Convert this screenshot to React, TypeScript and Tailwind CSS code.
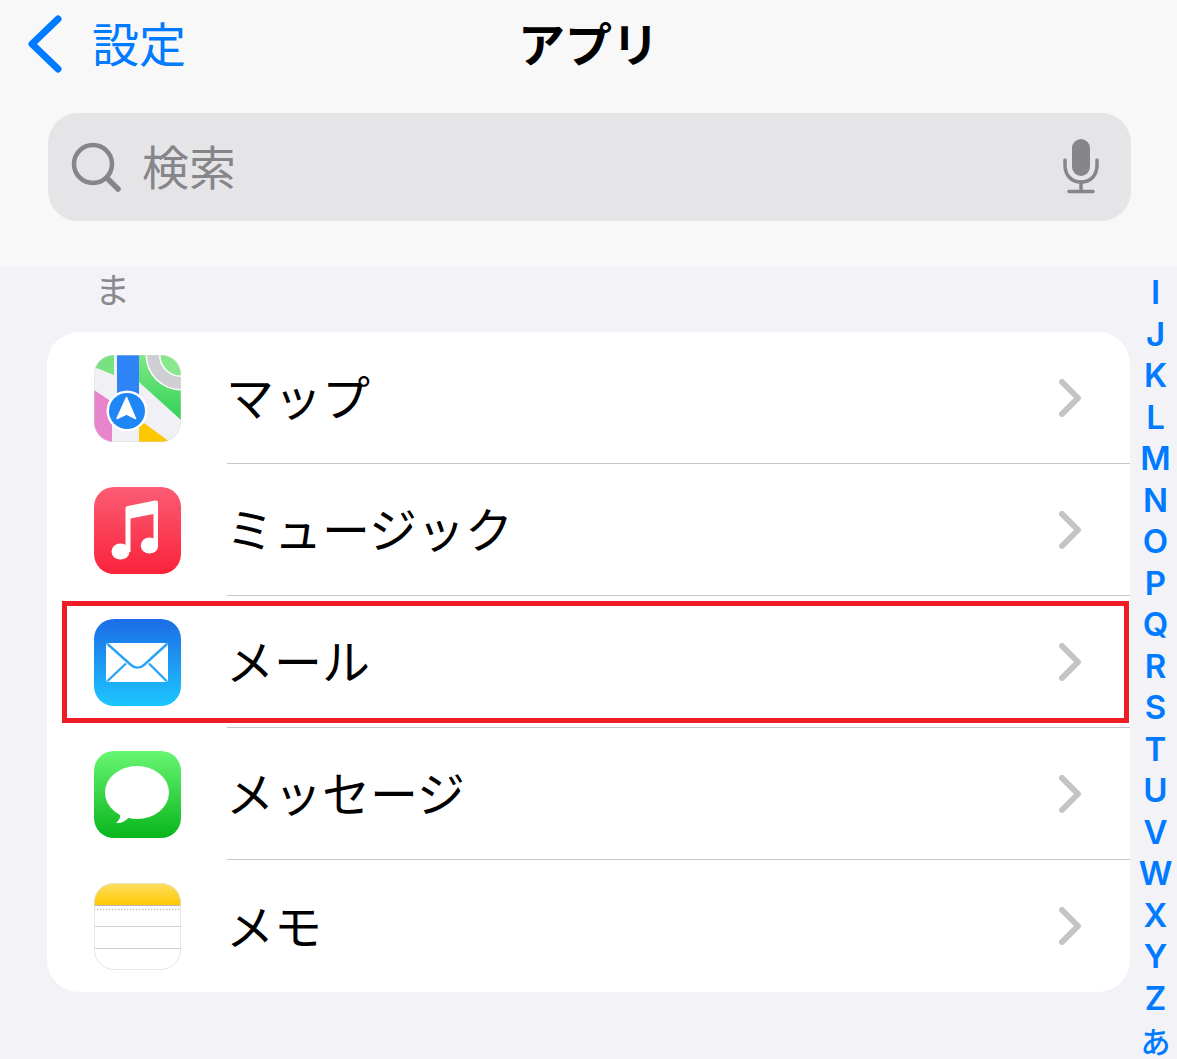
import React from 'react';

const jp = '"Noto Sans CJK JP", "Noto Sans", sans-serif';

const MapsIcon = () => (
    <svg viewBox="0 0 87 87" className="w-[87px] h-[87px]">
        <defs>
            <clipPath id="mapClip"><rect width="87" height="87" rx="20" /></clipPath>
            <linearGradient id="mapGreen" x1="0" y1="0" x2="0" y2="1">
                <stop offset="0" stopColor="#80e885" />
                <stop offset="1" stopColor="#30d158" />
            </linearGradient>
        </defs>
        <g clipPath="url(#mapClip)">
            <rect width="87" height="87" fill="#f1f0f4" />
            <path d="M0 0H20V20L0 12Z" fill="#78e280" />
            <path d="M45 0H87V65L45 27Z" fill="url(#mapGreen)" />
            <circle cx="87" cy="0" r="35.5" fill="#fff" />
            <circle cx="87" cy="0" r="34" fill="#cfcfd3" />
            <circle cx="87" cy="0" r="22" fill="#fff" />
            <circle cx="87" cy="0" r="20.5" fill="#86e88a" />
            <path d="M0 35L18 47V87H0Z" fill="#e884cc" />
            <path d="M45 71L50 68L76 87H45Z" fill="#fdc700" />
            <rect x="23" width="22" height="50" fill="#2f84f8" />
            <circle cx="33" cy="56" r="20.5" fill="#fff" />
            <circle cx="33" cy="56" r="18" fill="#1f86f5" />
            <path d="M32.5 42.5L41.5 63.5L32.5 59L23 63.5Z" fill="#fff" stroke="#fff" strokeWidth="1.5" strokeLinejoin="round" />
        </g>
        <rect x="0.25" y="0.25" width="86.5" height="86.5" rx="20" fill="none" stroke="#d8d8dc" strokeWidth="0.5" />
    </svg>
);

const MusicIcon = () => (
    <svg viewBox="0 0 87 87" className="w-[87px] h-[87px]">
        <defs>
            <linearGradient id="musicBg" x1="0" y1="0" x2="0" y2="1">
                <stop offset="0" stopColor="#fb5c74" />
                <stop offset="1" stopColor="#fa233b" />
            </linearGradient>
        </defs>
        <rect width="87" height="87" rx="20" fill="url(#musicBg)" />
        <path d="M31.5 21.5C31.5 20 32.5 19.2 34 18.9L61 13.5C62.8 13.1 64 14 64 15.5V59H59.5V27L36.5 31.5V65H31.5Z" fill="#fff" />
        <ellipse cx="26.5" cy="64.5" rx="9" ry="8" fill="#fff" />
        <ellipse cx="55.5" cy="58.5" rx="8.7" ry="8" fill="#fff" />
    </svg>
);

const MailIcon = () => (
    <svg viewBox="0 0 87 87" className="w-[87px] h-[87px]">
        <defs>
            <linearGradient id="mailBg" x1="0" y1="0" x2="0" y2="1">
                <stop offset="0" stopColor="#1d6ce6" />
                <stop offset="1" stopColor="#1cc6fe" />
            </linearGradient>
        </defs>
        <rect width="87" height="87" rx="20" fill="url(#mailBg)" />
        <rect x="12" y="24" width="62" height="39" rx="3" fill="#fff" />
        <path d="M13.5 25L37 46C41 49.5 46 49.5 50 46L73 25" fill="none" stroke="#2aa3f6" strokeWidth="2.4" />
        <path d="M13.5 62L32 44.5M72.5 62L55 44.5" fill="none" stroke="#2aa3f6" strokeWidth="2.4" />
    </svg>
);

const MessagesIcon = () => (
    <svg viewBox="0 0 87 87" className="w-[87px] h-[87px]">
        <defs>
            <linearGradient id="msgBg" x1="0" y1="0" x2="0" y2="1">
                <stop offset="0" stopColor="#68f672" />
                <stop offset="1" stopColor="#08b51c" />
            </linearGradient>
        </defs>
        <rect width="87" height="87" rx="20" fill="url(#msgBg)" />
        <ellipse cx="43" cy="41.5" rx="32" ry="26.5" fill="#fff" />
        <path d="M26 60C27 65 26 69 22 72C27 72.5 31.5 70.5 35 66Z" fill="#fff" />
    </svg>
);

const NotesIcon = () => (
    <svg viewBox="0 0 87 87" className="w-[87px] h-[87px]">
        <defs>
            <clipPath id="noteClip"><rect width="87" height="87" rx="20" /></clipPath>
            <linearGradient id="noteTop" x1="0" y1="0" x2="0" y2="1">
                <stop offset="0" stopColor="#ffde62" />
                <stop offset="1" stopColor="#fdc902" />
            </linearGradient>
        </defs>
        <g clipPath="url(#noteClip)">
            <rect width="87" height="87" fill="#fff" />
            <rect width="87" height="22" fill="url(#noteTop)" />
            <rect y="22" width="87" height="1" fill="#b9b9b9" />
            <line x1="0" y1="26.5" x2="87" y2="26.5" stroke="#c2c2c4" strokeWidth="1.4" strokeDasharray="1.4 1.6" />
            <rect y="43" width="87" height="1" fill="#d2d2d4" />
            <rect y="65" width="87" height="1" fill="#d2d2d4" />
        </g>
        <rect x="0.4" y="0.4" width="86.2" height="86.2" rx="20" fill="none" stroke="#dedede" strokeWidth="0.8" />
    </svg>
);

const rows = [
    { name: 'マップ', icon: <MapsIcon /> },
    { name: 'ミュージック', icon: <MusicIcon /> },
    { name: 'メール', icon: <MailIcon />, marked: true },
    { name: 'メッセージ', icon: <MessagesIcon /> },
    { name: 'メモ', icon: <NotesIcon /> },
];

const letters = ['I', 'J', 'K', 'L', 'M', 'N', 'O', 'P', 'Q', 'R', 'S', 'T', 'U', 'V', 'W', 'X', 'Y', 'Z'];

const App: React.FC = () => {
    return (
        <div className="w-[1177px] h-[1059px] overflow-hidden bg-[#f2f2f7]" style={{ fontFamily: jp }}>
            {/* Header */}
            <div className="h-[266px] bg-[#f9f8f8]">
                <div className="h-[88px] grid grid-cols-[1fr_auto_1fr] items-center">
                    <div className="flex items-center text-[#007aff]">
                        <svg viewBox="0 0 40 60" className="ml-[24px] w-[40px] h-[60px]">
                            <path d="M34 5L8 30L34 55" fill="none" stroke="#007aff" strokeWidth="7" strokeLinecap="round" strokeLinejoin="round" />
                        </svg>
                        <span className="ml-[28px] -mt-[5px] text-[47px] leading-[60px]">設定</span>
                    </div>
                    <div className="-mt-[5px] text-[47px] leading-[60px] font-bold text-black">アプリ</div>
                    <div />
                </div>
                <div className="mt-[25px] ml-[48px] w-[1083px] h-[108px] rounded-[30px] bg-[#e5e5e7] flex items-center">
                    <svg viewBox="0 0 52 52" className="ml-[22px] w-[52px] h-[52px]">
                        <circle cx="23" cy="23" r="19" fill="none" stroke="#86868a" strokeWidth="4.5" />
                        <path d="M37 37L48 48" fill="none" stroke="#86868a" strokeWidth="5.5" strokeLinecap="round" />
                    </svg>
                    <span className="ml-[20px] -mt-[5px] text-[47px] leading-[60px] text-[#86868a]">検索</span>
                    <svg viewBox="0 0 40 56" className="ml-auto mr-[30px] w-[40px] h-[56px]">
                        <rect x="11" y="0" width="18" height="37" rx="9" fill="#86868a" />
                        <path d="M4 21V26C4 36 10 43 20 43C30 43 36 36 36 26V21" fill="none" stroke="#86868a" strokeWidth="3.5" strokeLinecap="round" />
                        <path d="M20 43V52" stroke="#86868a" strokeWidth="3.5" />
                        <path d="M8 52.5H32" stroke="#86868a" strokeWidth="3.5" strokeLinecap="round" />
                    </svg>
                </div>
            </div>

            {/* List */}
            <div className="flex">
                <div className="w-[1130px] pl-[47px]">
                    <div className="h-[66px] pl-[48px] text-[35px] leading-[44px] text-[#8a8a8e]">ま</div>
                    <div className="w-[1083px] rounded-[32px] bg-white">
                        {rows.map((row, i) => (
                            <div key={row.name} className="relative h-[132px] flex items-center">
                                <div className="ml-[47px] w-[133px] shrink-0 flex">{row.icon}</div>
                                <div className={`flex-1 h-full flex items-center ${i < rows.length - 1 ? 'border-b border-[#c6c6c8]' : ''}`}>
                                    <span className="-ml-[1px] -mt-[5px] text-[48px] leading-[60px] text-black">{row.name}</span>
                                    <svg viewBox="0 0 24 38" className="ml-auto mr-[48px] w-[24px] h-[38px]">
                                        <path d="M4 3L20 19L4 35" fill="none" stroke="#c4c4c6" strokeWidth="6" strokeLinecap="round" strokeLinejoin="round" />
                                    </svg>
                                </div>
                                {row.marked && (
                                    <div className="absolute left-[15px] top-[5px] w-[1067px] h-[122px] border-[5px] border-[#ee1c25]" />
                                )}
                            </div>
                        ))}
                    </div>
                </div>
                <div className="w-[47px] pl-[4px] pt-[6px] flex flex-col items-center text-[#007aff] font-semibold text-[33px] leading-[41.5px]" style={{ fontFamily: `Inter, ${jp}` }}>
                    {letters.map(l => (
                        <div key={l} className="h-[41.5px]">{l}</div>
                    ))}
                    <div className="mt-[3px] text-[30px] font-medium leading-[41.5px]">あ</div>
                </div>
            </div>
        </div>
    );
};

export default App;
